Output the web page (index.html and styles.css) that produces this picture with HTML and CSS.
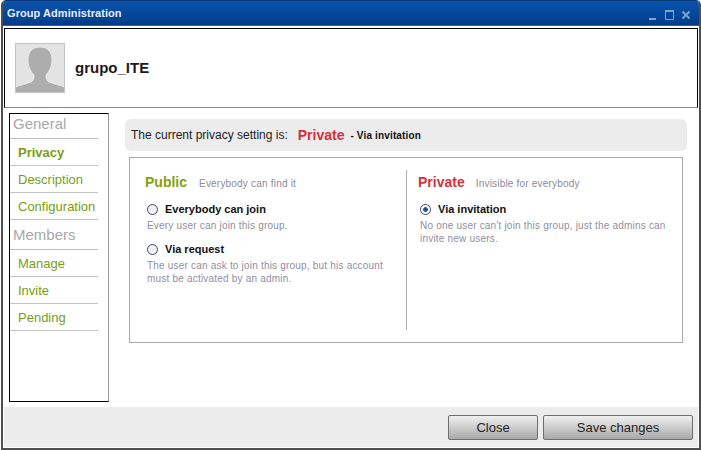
FILE: index.html
```html
<!DOCTYPE html>
<html>
<head>
<meta charset="utf-8">
<title>Group Administration</title>
<link rel="stylesheet" href="styles.css">
</head>
<body>
<div class="window">
  <div class="titlebar">
    <span class="title">Group Administration</span>
    <div class="controls">
      <svg width="44" height="12" viewBox="0 0 44 12"><path d="M1 10h7" stroke="#7da3d3" stroke-width="2" fill="none"/><path d="M17.500 1.500h8v9h-8z" stroke="#7da3d3" fill="none"/><path d="M17 2h9" stroke="#7da3d3" stroke-width="2"/><path d="M34.500 2.500l7 7M41.500 2.500l-7 7" stroke="#7da3d3" stroke-width="2" fill="none"/></svg>
    </div>
  </div>
  <div class="content">
    <header class="group-head">
      <svg class="avatar" width="50" height="50" viewBox="0 0 50 50"><rect width="50" height="50" fill="#e3e3e3"/><path d="M0 50v-6l16-5c2-1 3-3 3-7 -3-3-6-8-6-15 0-9 5-13 12-13s12 4 12 13c0 7-3 12-6 15 0 4 1 6 3 7l16 5v6z" fill="#adadad" stroke="#f3f3f3" stroke-width=".8"/><rect x=".5" y=".5" width="49" height="49" fill="none" stroke="#c4c4c4"/></svg>
      <h1 class="group-name">grupo_ITE</h1>
    </header>
    <div class="main">
      <nav class="sidebar">
        <div class="nav-head first">General</div>
        <a class="nav-link active">Privacy</a>
        <a class="nav-link">Description</a>
        <a class="nav-link">Configuration</a>
        <div class="nav-head">Members</div>
        <a class="nav-link">Manage</a>
        <a class="nav-link">Invite</a>
        <a class="nav-link">Pending</a>
      </nav>
      <section class="settings">
        <div class="current">
          <span>The current privacy setting is:</span>
          <strong class="current-value">Private</strong>
          <span class="current-sub">- Via invitation</span>
        </div>
        <div class="panel">
          <div class="col col-public">
            <div class="col-head"><span class="col-title public">Public</span><span class="col-note">Everybody can find it</span></div>
            <div class="option">
              <div class="option-label"><span class="radio"></span>Everybody can join</div>
              <p class="option-text">Every user can join this group.</p>
            </div>
            <div class="option">
              <div class="option-label"><span class="radio"></span>Via request</div>
              <p class="option-text">The user can ask to join this group, but his account must be activated by an admin.</p>
            </div>
          </div>
          <div class="col col-private">
            <div class="col-head"><span class="col-title private">Private</span><span class="col-note">Invisible for everybody</span></div>
            <div class="option">
              <div class="option-label"><span class="radio checked"></span>Via invitation</div>
              <p class="option-text">No one user can't join this group, just the admins can invite new users.</p>
            </div>
          </div>
        </div>
      </section>
    </div>
    <footer class="footer">
      <button class="btn btn-close">Close</button>
      <button class="btn btn-save">Save changes</button>
    </footer>
  </div>
</div>
</body>
</html>
```
FILE: styles.css
```css
* { box-sizing: border-box; }
html, body { margin: 0; padding: 0; background: #fff; }
body { width: 701px; height: 450px; overflow: hidden; font-family: "Liberation Sans", Arial, sans-serif; }
.window {
  width: 700px; height: 450px; margin-left: 1px;
  border: 2px solid #4f4f4f; border-top: 0;
  border-radius: 5px 5px 0 0;
  background: #fff;
  display: flex; flex-direction: column;
  overflow: hidden;
}
.titlebar {
  height: 26px; flex: none;
  margin: 0 -2px;
  padding: 0 9px 0 6px;
  border-top: 1px solid #0a3a7a;
  border-bottom: 1px solid #4a6078;
  background: linear-gradient(#0a54ad, #023c8a);
  display: flex; align-items: center; justify-content: space-between;
}
.title { color: #e6eef8; font-size: 11px; font-weight: bold; letter-spacing: .07px; }
.controls { display: flex; margin-top: 4px; }
.controls svg { display: block; }
.content { flex: 1; display: flex; flex-direction: column; min-height: 0; padding: 0 1px 1px; }
.group-head {
  height: 80px; margin-top: 2px; flex: none;
  border: 1px solid #000; border-bottom-color: #888;
  padding: 14px 10px;
  display: flex; align-items: center; gap: 10px;
}
.avatar { display: block; flex: none; }
.group-name { margin: -2px 0 0; font-size: 15px; font-weight: bold; color: #1a1a1a; }
.main { flex: 1; display: flex; min-height: 0; }
.sidebar {
  width: 100px; height: 289px; margin: 5px 0 0 5px; flex: none;
  border: 1px solid #000; border-right-color: #999;
}
.nav-head { width: 88px; height: 30px; padding: 4px 3px 0; font-size: 15px; line-height: 22px; color: #a8a8a8; border-bottom: 1px solid #bbb; }
.nav-head.first { height: 25px; padding-top: 0; line-height: 20px; }
.nav-link { display: block; width: 88px; height: 27px; padding-left: 8px; font-size: 13px; line-height: 28px; color: #7a9e12; border-bottom: 1px solid #c4c4c4; }
.nav-link.active { font-weight: bold; }
.settings { flex: 1; padding: 11px 11px 0 16px; }
.current {
  height: 32px; border-radius: 6px; background: #ececec;
  padding: 0 6px; display: flex; align-items: center;
  font-size: 12px; color: #222;
}
.current-value { margin-left: 10px; font-size: 14px; color: #d3323c; }
.current-sub { margin-left: 6px; font-size: 10px; font-weight: bold; color: #111; letter-spacing: .15px; }
.panel {
  width: 554px; height: 186px; margin: 6px 0 0 4px;
  border: 1px solid #aaa;
  padding: 12px 0;
  display: flex;
}
.col { height: 160px; }
.col-public { width: 277px; padding: 4px 20px 0 15px; border-right: 1px solid #b0b0b0; }
.col-private { flex: 1; padding: 4px 16px 0 11px; }
.col-head { height: 22px; display: flex; align-items: baseline; }
.col-title { font-size: 14px; font-weight: bold; }
.col-title.public { color: #84a20e; }
.col-title.private { color: #d3323c; }
.col-note { margin-left: 11px; font-size: 10px; color: #8a8a9a; letter-spacing: .2px; }
.col-public .col-note { margin-left: 12px; }
.option { margin-top: 6px; }
.option + .option { margin-top: 10px; }
.option-label { display: flex; align-items: center; height: 14px; font-size: 11px; font-weight: bold; color: #111; }
.radio {
  width: 11px; height: 11px; border-radius: 50%; margin: 0 7px 0 2px; flex: none;
  border: 1px solid #3f4a66; background: #f0f0f4;
}
.radio.checked { background: radial-gradient(circle, #1c4fa8 0 2px, #fff 2.6px); }
.option-text { margin: 3px 0 0 2px; font-size: 10px; line-height: 13px; color: #8f8f9f; letter-spacing: .2px; }
.footer {
  height: 40px; flex: none; background: #ececec;
  padding: 8px 5px 0 0; display: flex; justify-content: flex-end; gap: 5px; align-items: flex-start;
}
.btn {
  height: 25px; border: 1px solid #6e6e6e; border-radius: 2px;
  background: linear-gradient(#f0f0f0, #c9c9c9 55%, #a9a9a9);
  font: 13px "Liberation Sans", Arial, sans-serif; color: #222; padding: 0;
}
.btn-close { width: 90px; }
.btn-save { width: 150px; }
```
